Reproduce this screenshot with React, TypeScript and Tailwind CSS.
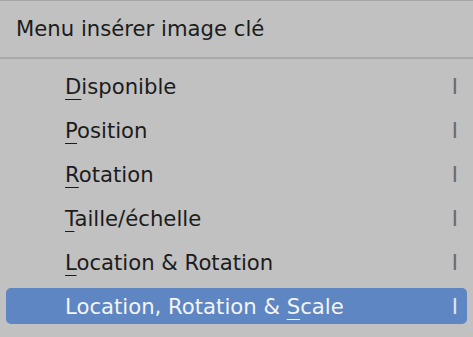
interface MenuItem {
  key: string
  before: string
  after: string
  active?: boolean
}

export default function App() {
  const items: MenuItem[] = [
    { before: "", key: "D", after: "isponible" },
    { before: "", key: "P", after: "osition" },
    { before: "", key: "R", after: "otation" },
    { before: "", key: "T", after: "aille/échelle" },
    { before: "", key: "L", after: "ocation & Rotation" },
    { before: "Location, Rotation & ", key: "S", after: "cale", active: true },
  ]

  return (
    <div
      className="w-[473px] h-[337px] bg-[#c1c1c1] border-t border-[#a6a6a6] overflow-hidden"
      style={{ fontFamily: '"DejaVu Sans", sans-serif' }}
    >
      <div className="h-[56px] flex items-center pl-4 text-[21.2px] text-[#1c1c1c]">
        Menu insérer image clé
      </div>
      <div className="h-[2px] bg-[#a9a9a9]" />
      <div className="pt-[5px]">
        {items.map((item, index) => (
          <div key={index} className="h-[44px] px-[6px] py-[4px]">
            <div
              className={
                "h-full flex items-center justify-between rounded-[5px] pl-[59px] pr-[9px] pt-[1px] text-[21.2px] " +
                (item.active ? "bg-[#5e86c3] text-[#f4f4f4]" : "text-[#1c1c1c]")
              }
            >
              <span>
                {item.before}
                <span className="underline decoration-1 underline-offset-[5px]">{item.key}</span>
                {item.after}
              </span>
              <span className={item.active ? "text-[#dfe6f1]" : "text-[#6c6c6c]"}>I</span>
            </div>
          </div>
        ))}
      </div>
    </div>
  )
}
